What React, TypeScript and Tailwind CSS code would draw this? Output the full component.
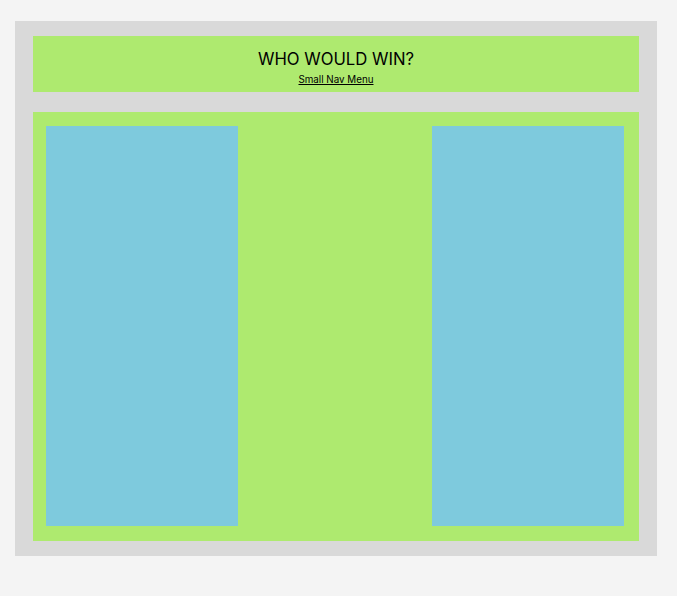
import React from "react";

export default function App() {
  return (
    <div className="min-h-[596px] w-[677px] bg-[#f4f4f4] pt-[21px] pl-[15px]" style={{ fontFamily: "Inter, 'Noto Sans', sans-serif" }}>
      <div className="flex w-[642px] flex-col gap-[20px] bg-[#d9d9d9] pl-[18px] pr-[18px] pt-[15px] pb-[15px]">
        <div className="flex h-[56px] flex-col items-center bg-[#aeea6f] pt-[13px] text-black">
          <div className="text-[16.7px] leading-[20px]">WHO WOULD WIN?</div>
          <a className="mt-[5px] text-[9.8px] leading-[12px] underline">Small Nav Menu</a>
        </div>
        <div className="flex h-[429px] justify-between bg-[#aeea6f] pt-[14px] pb-[15px] pl-[13px] pr-[15px]">
          <div className="w-[192px] bg-[#7ecadd]" />
          <div className="w-[192px] bg-[#7ecadd]" />
        </div>
      </div>
    </div>
  );
}
